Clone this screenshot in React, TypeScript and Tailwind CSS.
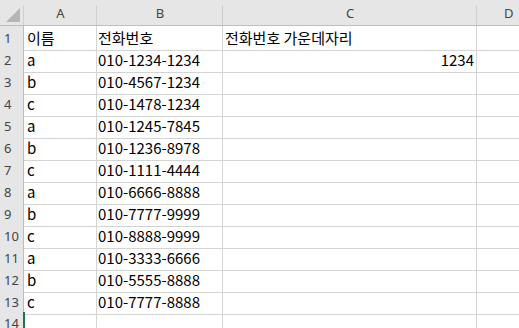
import React from 'react';

const rows: [string, string, string][] = [
  ['이름', '전화번호', '전화번호 가운데자리'],
  ['a', '010-1234-1234', '1234'],
  ['b', '010-4567-1234', ''],
  ['c', '010-1478-1234', ''],
  ['a', '010-1245-7845', ''],
  ['b', '010-1236-8978', ''],
  ['c', '010-1111-4444', ''],
  ['a', '010-6666-8888', ''],
  ['b', '010-7777-9999', ''],
  ['c', '010-8888-9999', ''],
  ['a', '010-3333-6666', ''],
  ['b', '010-5555-8888', ''],
  ['c', '010-7777-8888', ''],
];

const cols = 'grid grid-cols-[24px_73px_126px_254px_1fr]';
const cellFont = { fontFamily: '"Noto Sans CJK KR", "Noto Sans", sans-serif' };
const headFont = { fontFamily: '"Noto Sans", "Liberation Sans", sans-serif' };

const ColHead = ({ label }: { label: string }) => (
  <div className="relative flex items-center justify-center pt-[3px] text-[13px] text-[#444]" style={headFont}>
    {label}
    <span className="absolute right-0 top-[5px] bottom-0 w-px bg-[#cfcfcf]" />
  </div>
);

export default function App() {
  return (
    <div className="w-[519px] h-[328px] overflow-hidden bg-white select-none">
      {/* column header */}
      <div className={`${cols} h-[26px] bg-[#e6e6e6] border-b border-[#bdbdbd]`}>
        <div className="relative">
          <svg className="absolute left-0 top-0" width="24" height="25" viewBox="0 0 24 25">
            <polygon points="20,8 20,22 6,22" fill="#b5b5b5" />
          </svg>
          <span className="absolute right-0 top-[5px] bottom-0 w-px bg-[#cfcfcf]" />
        </div>
        <ColHead label="A" />
        <ColHead label="B" />
        <ColHead label="C" />
        <div className="flex items-center pt-[3px] pl-[27px] text-[13px] text-[#444]" style={headFont}>D</div>
      </div>

      {rows.map((r, i) => (
        <div key={i} className={`${cols} h-[22px]`}>
          <div className="flex items-center pl-[4px] pt-[2px] text-[13px] text-[#444] bg-[#e6e6e6] border-r border-b border-r-[#bdbdbd] border-b-[#d0d0d0]" style={headFont}>
            {i + 1}
          </div>
          <div className="flex items-center pl-[3px] pt-[1px] text-[15px] text-black border-r border-b border-[#d4d4d4] whitespace-nowrap" style={cellFont}>
            {r[0]}
          </div>
          <div className="flex items-center pl-[1px] pt-[1px] text-[15px] text-black border-r border-b border-[#d4d4d4] whitespace-nowrap" style={cellFont}>
            {r[1]}
          </div>
          <div className={`flex items-center px-[2px] pt-[1px] text-[15px] text-black border-r border-b border-[#d4d4d4] whitespace-nowrap ${i === 1 ? 'justify-end' : ''}`} style={cellFont}>
            {r[2]}
          </div>
          <div className="border-b border-[#d4d4d4]" />
        </div>
      ))}

      <div className={`${cols} h-[22px]`}>
        <div className="flex items-center pl-[4px] pt-[2px] text-[13px] text-[#444] bg-[#e6e6e6] border-r border-[#bdbdbd]" style={headFont}>
          14
        </div>
        <div className="border-l-2 border-l-[#217346] -ml-[1px] border-r border-r-[#d4d4d4]" />
        <div className="border-r border-[#d4d4d4]" />
        <div className="border-r border-[#d4d4d4]" />
        <div />
      </div>
    </div>
  );
}
